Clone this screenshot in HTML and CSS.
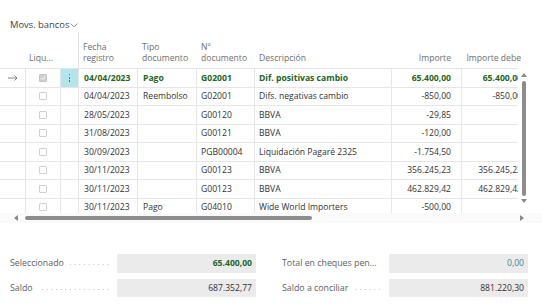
FILE: index.html
```html
<!DOCTYPE html>
<html lang="es">
<head>
<meta charset="utf-8">
<title>Movs. bancos</title>
<link rel="stylesheet" href="styles.css">
</head>
<body>
<div class="page">
  <div class="title">Movs. bancos <svg class="chev" width="8" height="5" viewBox="0 0 8 5"><polyline points="0.5,0.5 4,4 7.5,0.5" fill="none" stroke="#777" stroke-width="0.8"/></svg></div>

  <div class="grid head">
    <div class="c"></div>
    <div class="c liq">Liqu...</div>
    <div class="c sep"></div>
    <div class="c">Fecha<br>registro</div>
    <div class="c">Tipo<br>documento</div>
    <div class="c">Nº<br>documento</div>
    <div class="c">Descripción</div>
    <div class="c num">Importe</div>
    <div class="c num">Importe debe</div>
  </div>

  <div class="bodywrap">
    <div class="viewport">
      <div class="grid row sel">
        <div class="c arrow"><svg width="10" height="6" viewBox="0 0 10 6"><path d="M0 3H9M6.5 0.5L9 3L6.5 5.5" fill="none" stroke="#666" stroke-width="0.8"/></svg></div>
        <div class="c chk"><span class="box on"><svg width="6" height="6" viewBox="0 0 6 6"><path d="M1 3.2L2.4 4.6L5 1.5" fill="none" stroke="#fff" stroke-width="0.9"/></svg></span></div>
        <div class="c dots"><i></i><i></i><i></i></div>
        <div class="c">04/04/2023</div>
        <div class="c">Pago</div>
        <div class="c">G02001</div>
        <div class="c">Dif. positivas cambio</div>
        <div class="c num">65.400,00</div>
        <div class="c num">65.400,00</div>
      </div>
      <div class="grid row">
        <div class="c"></div><div class="c chk"><span class="box"></span></div><div class="c"></div>
        <div class="c">04/04/2023</div><div class="c">Reembolso</div><div class="c">G02001</div>
        <div class="c">Difs. negativas cambio</div><div class="c num">-850,00</div><div class="c num">-850,00</div>
      </div>
      <div class="grid row">
        <div class="c"></div><div class="c chk"><span class="box"></span></div><div class="c"></div>
        <div class="c">28/05/2023</div><div class="c"></div><div class="c">G00120</div>
        <div class="c">BBVA</div><div class="c num">-29,85</div><div class="c num"></div>
      </div>
      <div class="grid row">
        <div class="c"></div><div class="c chk"><span class="box"></span></div><div class="c"></div>
        <div class="c">31/08/2023</div><div class="c"></div><div class="c">G00121</div>
        <div class="c">BBVA</div><div class="c num">-120,00</div><div class="c num"></div>
      </div>
      <div class="grid row">
        <div class="c"></div><div class="c chk"><span class="box"></span></div><div class="c"></div>
        <div class="c">30/09/2023</div><div class="c"></div><div class="c">PGB00004</div>
        <div class="c">Liquidación Pagaré 2325</div><div class="c num">-1.754,50</div><div class="c num"></div>
      </div>
      <div class="grid row">
        <div class="c"></div><div class="c chk"><span class="box"></span></div><div class="c"></div>
        <div class="c">30/11/2023</div><div class="c"></div><div class="c">G00123</div>
        <div class="c">BBVA</div><div class="c num">356.245,23</div><div class="c num">356.245,23</div>
      </div>
      <div class="grid row">
        <div class="c"></div><div class="c chk"><span class="box"></span></div><div class="c"></div>
        <div class="c">30/11/2023</div><div class="c"></div><div class="c">G00123</div>
        <div class="c">BBVA</div><div class="c num">462.829,42</div><div class="c num">462.829,42</div>
      </div>
      <div class="grid row">
        <div class="c"></div><div class="c chk"><span class="box"></span></div><div class="c"></div>
        <div class="c">30/11/2023</div><div class="c">Pago</div><div class="c">G04010</div>
        <div class="c">Wide World Importers</div><div class="c num">-500,00</div><div class="c num"></div>
      </div>
    </div>
    <div class="vscroll">
      <svg class="tri" width="6" height="4" viewBox="0 0 6 4"><path d="M0 4L3 0L6 4Z" fill="#888"/></svg>
      <div class="vthumb"></div>
      <svg class="tri" width="6" height="4" viewBox="0 0 6 4"><path d="M0 0L3 4L6 0Z" fill="#888"/></svg>
    </div>
  </div>

  <div class="hscroll">
    <svg class="htri" width="4" height="6" viewBox="0 0 4 6"><path d="M4 0L0 3L4 6Z" fill="#888"/></svg>
    <div class="hthumb"></div>
    <div class="hspace"></div>
    <svg class="htri" width="4" height="6" viewBox="0 0 4 6"><path d="M0 0L4 3L0 6Z" fill="#888"/></svg>
  </div>

  <div class="totals">
    <div class="field"><span class="lbl">Seleccionado</span><span class="lead"></span><span class="val green">65.400,00</span></div>
    <div class="field"><span class="lbl">Total en cheques pen...</span><span class="lead"></span><span class="val teal">0,00</span></div>
    <div class="field"><span class="lbl">Saldo</span><span class="lead"></span><span class="val">687.352,77</span></div>
    <div class="field"><span class="lbl">Saldo a conciliar</span><span class="lead"></span><span class="val">881.220,30</span></div>
  </div>
</div>
</body>
</html>
```

FILE: styles.css
```css
* { box-sizing: border-box; }
html, body { margin: 0; padding: 0; background: #fff; }
body {
  font-family: "Open Sans", "Noto Sans", sans-serif;
  font-size: 8.6px;
  color: #323130;
  width: 542px;
  height: 305px;
  overflow: hidden;
}
.page { padding-top: 18px; }

.title {
  height: 14px;
  line-height: 14px;
  padding-left: 10px;
  font-size: 9.4px;
  color: #444;
  display: flex;
  align-items: center;
  gap: 1px;
}
.chev { margin-top: 1px; }

.grid {
  display: grid;
  grid-template-columns: 26px 35px 18px 59px 59px 58px 137px 70px 70px;
  width: 532px;
}
.head {
  height: 36px;
  align-items: end;
  color: #6e6e6e;
  line-height: 10.5px;
}
.head .c { padding: 0 5px 5px 4px; white-space: nowrap; }
.head .liq { padding-left: 3px; }
.head .sep { align-self: stretch; border-right: 1px solid #e3e3e3; margin-top: 0; }
.head .num { text-align: right; padding-right: 11px; }

.bodywrap { display: flex; height: 145px; }
.viewport {
  width: 518px;
  overflow: hidden;
  border-top: 1px solid #e3e3e3;
}
.row {
  height: 18.5px;
  border-bottom: 1px solid #e6e6e6;
  align-items: center;
}
.row .c {
  height: 100%;
  display: flex;
  align-items: center;
  padding-left: 5px;
  white-space: nowrap;
  border-right: 1px solid #e6e6e6;
}
.row .c.num { justify-content: flex-end; padding-right: 10px; padding-left: 0; }
.row .c:nth-child(6), .row .c:nth-child(7) { padding-left: 4px; }
.row .c:last-child { border-right: none; }
.sel { color: #22651b; font-weight: 700; }
.arrow { justify-content: center; padding-left: 0 !important; }
.chk { justify-content: center; padding-left: 0 !important; }
.box {
  width: 8px; height: 8px;
  border: 1px solid #d0d0d0;
  border-radius: 1px;
  background: #fff;
  display: flex; align-items: center; justify-content: center;
}
.box.on { background: #cfcfcf; border-color: #c4c4c4; }
.dots {
  background: #b3e6ea;
  flex-direction: column;
  justify-content: center;
  align-items: center !important;
  padding-left: 0 !important;
  gap: 1.5px;
}
.dots i { display: block; width: 1.6px; height: 1.6px; border-radius: 50%; background: #3b5e63; }

.vscroll {
  width: 12px;
  display: flex;
  flex-direction: column;
  align-items: center;
  padding-top: 5px;
}
.vthumb {
  width: 4.5px;
  height: 115px;
  background: #8c8c8c;
  border-radius: 2.5px;
  margin: 4px 0 3px;
}

.hscroll {
  height: 10px;
  display: flex;
  align-items: center;
  padding-left: 14px;
  padding-right: 18px;
  background: #fafafa;
}
.hthumb {
  width: 287px;
  height: 4.5px;
  background: #8c8c8c;
  border-radius: 2.5px;
  margin-left: 7px;
}
.hspace { flex: 1; }

.totals {
  margin-top: 31px;
  padding: 0 14px 0 10px;
  display: grid;
  grid-template-columns: 246px 246px;
  column-gap: 26px;
  row-gap: 6px;
}
.field { display: flex; align-items: center; height: 18.5px; }
.lbl { color: #605e5c; white-space: nowrap; font-size: 8.8px; }
.lead {
  flex: 1;
  height: 3px;
  align-self: center;
  margin: 3px 7px 0 5px;
  background-image: radial-gradient(circle, #c2c2c2 0.55px, transparent 0.75px);
  background-size: 4.7px 3px;
  background-repeat: repeat-x;
  background-position: right center;
}
.val {
  width: 139px;
  height: 100%;
  background: #ebebeb;
  display: flex;
  align-items: center;
  justify-content: flex-end;
  padding-right: 4px;
  color: #323130;
}
.val.green { color: #22651b; font-weight: 700; }
.val.teal { color: #3b8594; }
```
